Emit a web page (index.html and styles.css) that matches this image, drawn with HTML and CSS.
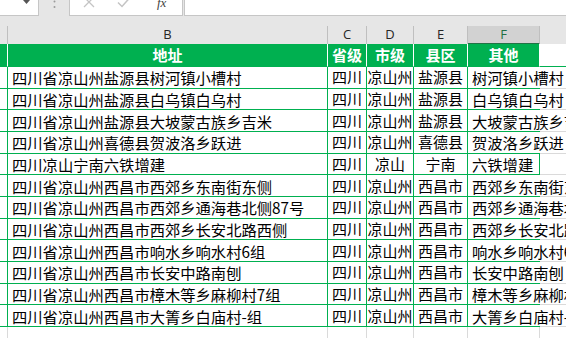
FILE: index.html
```html
<!DOCTYPE html>
<html lang="zh">
<head>
<meta charset="utf-8">
<title>地址表</title>
<link rel="stylesheet" href="styles.css">
</head>
<body>
<div class="app">
  <div class="formula-bar">
    <div class="name-box">
      <svg class="caret" width="7" height="4" viewBox="0 0 7 4"><path d="M0 0H7L3.5 4Z" fill="#555"/></svg>
    </div>
    <div class="grip">
      <svg width="3" height="9" viewBox="0 0 3 9"><circle cx="1.5" cy="1.5" r="1" fill="#9a9a9a"/><circle cx="1.5" cy="7" r="1" fill="#9a9a9a"/></svg>
    </div>
    <div class="fx-box">
      <svg class="ico" width="12" height="12" viewBox="0 0 12 12"><path d="M1 1L11 11M11 1L1 11" stroke="#c4c4c4" stroke-width="1.3" fill="none"/></svg>
      <svg class="ico" width="14" height="12" viewBox="0 0 14 12"><path d="M1 6.5L5 10.5L13 1.5" stroke="#c4c4c4" stroke-width="1.5" fill="none"/></svg>
      <span class="fx">fx</span>
    </div>
    <div class="formula-input"></div>
  </div>

  <div class="col-heads">
    <div class="ch"></div>
    <div class="ch">B</div>
    <div class="ch">C</div>
    <div class="ch">D</div>
    <div class="ch">E</div>
    <div class="ch sel">F</div>
    <div class="ch last"></div>
  </div>

  <div class="sheet">
    <div class="c hd"></div>
    <div class="c hd">地址</div>
    <div class="c hd">省级</div>
    <div class="c hd">市级</div>
    <div class="c hd">县区</div>
    <div class="c hd">其他</div>
    <div class="c g top"></div>

    <div class="c"></div><div class="c">四川省凉山州盐源县树河镇小槽村</div><div class="c m">四川</div><div class="c m">凉山州</div><div class="c m">盐源县</div><div class="c f">树河镇小槽村</div><div class="c g"></div>
    <div class="c"></div><div class="c">四川省凉山州盐源县白乌镇白乌村</div><div class="c m">四川</div><div class="c m">凉山州</div><div class="c m">盐源县</div><div class="c f">白乌镇白乌村</div><div class="c g"></div>
    <div class="c"></div><div class="c">四川省凉山州盐源县大坡蒙古族乡吉米</div><div class="c m">四川</div><div class="c m">凉山州</div><div class="c m">盐源县</div><div class="c f">大坡蒙古族乡吉米</div><div class="c g"></div>
    <div class="c"></div><div class="c">四川省凉山州喜德县贺波洛乡跃进</div><div class="c m">四川</div><div class="c m">凉山州</div><div class="c m">喜德县</div><div class="c f">贺波洛乡跃进</div><div class="c g"></div>
    <div class="c"></div><div class="c">四川凉山宁南六铁增建</div><div class="c m">四川</div><div class="c m">凉山</div><div class="c m">宁南</div><div class="c f boxed">六铁增建</div><div class="c g"></div>
    <div class="c"></div><div class="c">四川省凉山州西昌市西郊乡东南街东侧</div><div class="c m">四川</div><div class="c m">凉山州</div><div class="c m">西昌市</div><div class="c f">西郊乡东南街东侧</div><div class="c g"></div>
    <div class="c"></div><div class="c">四川省凉山州西昌市西郊乡通海巷北侧87号</div><div class="c m">四川</div><div class="c m">凉山州</div><div class="c m">西昌市</div><div class="c f">西郊乡通海巷北侧87号</div><div class="c g"></div>
    <div class="c"></div><div class="c">四川省凉山州西昌市西郊乡长安北路西侧</div><div class="c m">四川</div><div class="c m">凉山州</div><div class="c m">西昌市</div><div class="c f">西郊乡长安北路西侧</div><div class="c g"></div>
    <div class="c"></div><div class="c">四川省凉山州西昌市响水乡响水村6组</div><div class="c m">四川</div><div class="c m">凉山州</div><div class="c m">西昌市</div><div class="c f">响水乡响水村6组</div><div class="c g"></div>
    <div class="c"></div><div class="c">四川省凉山州西昌市长安中路南刨</div><div class="c m">四川</div><div class="c m">凉山州</div><div class="c m">西昌市</div><div class="c f">长安中路南刨</div><div class="c g"></div>
    <div class="c"></div><div class="c">四川省凉山州西昌市樟木等乡麻柳村7组</div><div class="c m">四川</div><div class="c m">凉山州</div><div class="c m">西昌市</div><div class="c f">樟木等乡麻柳村7组</div><div class="c g"></div>
    <div class="c"></div><div class="c">四川省凉山州西昌市大箐乡白庙村-组</div><div class="c m">四川</div><div class="c m">凉山州</div><div class="c m">西昌市</div><div class="c f">大箐乡白庙村-组</div><div class="c g"></div>

    <div class="c e"></div><div class="c e"></div><div class="c e"></div><div class="c e"></div><div class="c e"></div><div class="c e"></div><div class="c g"></div>
  </div>
</div>
</body>
</html>
```

FILE: styles.css
```css
* { box-sizing: border-box; }
html, body { margin: 0; padding: 0; background: #fff; }
body { width: 566px; height: 338px; overflow: hidden; }

.app {
  width: 566px;
  height: 338px;
  background: #e6e6e6;
  display: flex;
  flex-direction: column;
  font-family: "Noto Sans CJK SC", "Noto Sans", sans-serif;
  overflow: hidden;
}

/* formula bar */
.formula-bar {
  display: flex;
  height: 16px;
  flex: none;
}
.name-box {
  width: 39px;
  background: #fff;
  border-right: 1px solid #c6c6c6;
  border-bottom: 1px solid #c6c6c6;
  display: flex;
  justify-content: flex-end;
  align-items: flex-start;
  padding-right: 8px;
}
.grip {
  width: 30px;
  display: flex;
  justify-content: center;
  align-items: flex-start;
  padding-left: 1px;
}
.fx-box {
  width: 114px;
  background: #fff;
  border-left: 1px solid #c6c6c6;
  border-right: 1px solid #c6c6c6;
  border-bottom: 1px solid #c6c6c6;
  display: flex;
  align-items: flex-start;
  padding-left: 13px;
  gap: 22px;
  overflow: hidden;
}
.ico { margin-top: -4px; flex: none; }
.fx {
  font-family: "Liberation Serif", serif;
  font-style: italic;
  font-size: 13px;
  line-height: 10px;
  color: #444;
  margin-top: -2px;
  margin-left: 4px;
}
.formula-input {
  flex: 1;
  margin-left: 1px;
  background: #fff;
  border-left: 1px solid #c6c6c6;
  border-bottom: 1px solid #c6c6c6;
}

/* column headers */
.col-heads {
  margin-top: 10px;
  height: 18px;
  flex: none;
  display: grid;
  grid-template-columns: 8px 320px 39px 47px 54px 72px 1fr;
}
.ch {
  border-right: 1px solid #bfbfbf;
  border-bottom: 1px solid #c6c6c6;
  font-family: "Open Sans", "Noto Sans", sans-serif;
  font-size: 13px;
  line-height: 17px;
  color: #262626;
  text-align: center;
}
.ch.sel {
  background: #d2d2d2;
  color: #1f6f43;
  border-bottom: 2px solid #217346;
}
.ch.last { border-right: none; }

/* sheet */
.sheet {
  flex: 1;
  background: #fff;
  display: grid;
  grid-template-columns: 8px 320px 39px 47px 54px 72px 1fr;
  grid-template-rows: 23px;
  grid-auto-rows: 21.67px;
  align-content: start;
}
.c {
  border-right: 1px solid #00b050;
  border-bottom: 1px solid #00b050;
  font-size: 15.3px;
  line-height: 16px;
  color: #000;
  white-space: nowrap;
  overflow: hidden;
  display: flex;
  align-items: center;
  padding: 0 0 0 4px;
}
.c.m {
  justify-content: center;
  padding: 0;
  font-size: 15px;
  overflow: visible;
}
.c.f { overflow: visible; border-right: none; }
.c.f.boxed { border-right: 1px solid #00b050; }
.c.hd {
  background: #00b050;
  border-right: 1px solid #fff;
  color: #fff;
  font-weight: 700;
  font-size: 15px;
  justify-content: center;
  padding: 0;
}
.c.g {
  background: transparent;
  border-right: none;
  border-bottom: 1px solid #dadada;
}
.c.g.top { border-bottom: 1px solid #00b050; }
.c.e {
  border-right: 1px solid #dadada;
  border-bottom: 1px solid #dadada;
}
```
